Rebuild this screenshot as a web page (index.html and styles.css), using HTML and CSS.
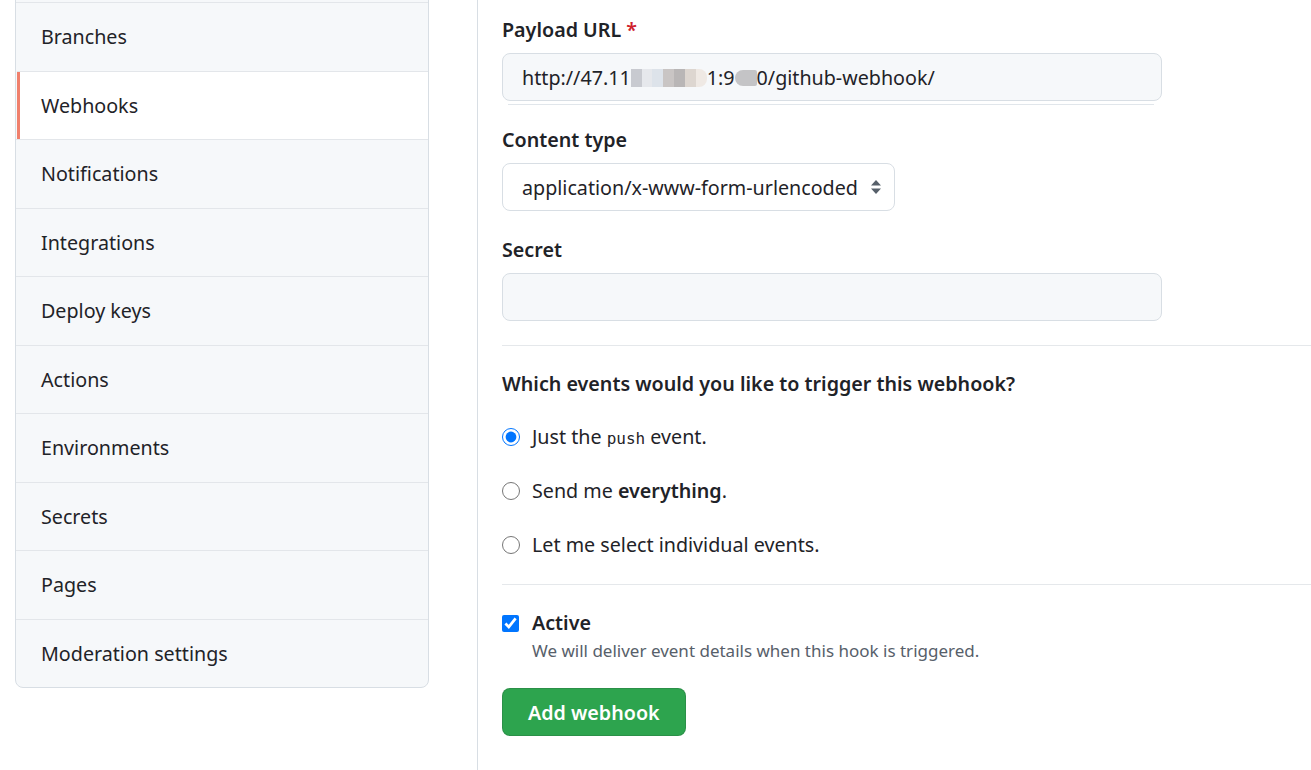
FILE: index.html
```html
<!DOCTYPE html>
<html lang="en">
<head>
<meta charset="utf-8">
<title>Webhooks</title>
<link rel="stylesheet" href="styles.css">
</head>
<body>
<div class="layout">
  <aside class="sidebar">
    <nav class="menu">
      <a class="menu-item">Branches</a>
      <a class="menu-item selected">Webhooks</a>
      <a class="menu-item">Notifications</a>
      <a class="menu-item">Integrations</a>
      <a class="menu-item">Deploy keys</a>
      <a class="menu-item">Actions</a>
      <a class="menu-item">Environments</a>
      <a class="menu-item">Secrets</a>
      <a class="menu-item">Pages</a>
      <a class="menu-item">Moderation settings</a>
    </nav>
  </aside>
  <main class="main">
    <div class="form-group">
      <label class="label">Payload URL <span class="req">*</span></label>
      <div class="input filled">http://47.11<span class="mosaic"><i></i><i></i><i></i><i></i><i></i><i></i><i></i></span>1:9<span class="blob"></span>0/github-webhook/</div>
      <div class="underline"></div>
    </div>
    <div class="form-group">
      <label class="label">Content type</label>
      <div class="select">
        <span>application/x-www-form-urlencoded</span>
        <svg class="caret" width="12" height="16" viewBox="0 0 12 16"><path d="M6 1 L11 6.5 H1 Z M6 15 L11 9.5 H1 Z" fill="#57606a"/></svg>
      </div>
    </div>
    <div class="form-group">
      <label class="label">Secret</label>
      <div class="input"></div>
    </div>
    <hr class="divider">
    <h3 class="heading">Which events would you like to trigger this webhook?</h3>
    <div class="radios">
      <label class="radio"><input type="radio" name="ev" checked><span>Just the <code>push</code> event.</span></label>
      <label class="radio"><input type="radio" name="ev"><span>Send me <strong>everything</strong>.</span></label>
      <label class="radio"><input type="radio" name="ev"><span>Let me select individual events.</span></label>
    </div>
    <hr class="divider">
    <div class="check">
      <input type="checkbox" checked>
      <div class="check-body">
        <div class="check-label">Active</div>
        <div class="note">We will deliver event details when this hook is triggered.</div>
      </div>
    </div>
    <button class="btn">Add webhook</button>
  </main>
</div>
</body>
</html>
```
FILE: styles.css
```css
html, body { margin: 0; padding: 0; background: #fff; }
body {
  font-family: "Noto Sans", "Open Sans", sans-serif;
  font-size: 19.7px;
  color: #1f2328;
  overflow: hidden;
  height: 770px;
}
.layout { display: flex; height: 770px; }
.sidebar {
  width: 477px;
  border-right: 1px solid #d8dee4;
  flex: none;
}
.menu {
  margin: -20px 0 0 15px;
  width: 412px;
  border: 1px solid #d8dee4;
  border-radius: 0 0 8px 8px;
  padding-top: 21px;
  background: #f6f8fa;
  overflow: hidden;
}
.menu-item {
  display: flex;
  align-items: center;
  box-sizing: border-box;
  height: 68.5px;
  padding-top: 1px;
  border-top: 1px solid #e3e6ea;
  padding-left: 25px;
  line-height: 30px;
  color: #1f2328;
}
.menu-item.selected {
  background: #fff;
  box-shadow: inset 3px 0 0 #f0806c;
  margin-left: 1px;
  padding-left: 24px;
}
.main { padding: 15px 0 0 24px; flex: 1; }
.form-group { margin-bottom: 24px; }
.label { display: block; font-weight: 600; line-height: 30px; margin-bottom: 8px; }
.req { color: #cf222e; }
.input {
  width: 658px;
  height: 46px;
  box-sizing: content-box;
  border: 1px solid #d8dee4;
  border-radius: 8px;
  background: #f6f8fa;
  display: flex;
  align-items: center;
}
.input.filled { padding-left: 19px; width: 639px; white-space: pre; }
.mosaic { display: inline-flex; height: 18px; width: 76px; margin-top: 2px; }
.mosaic i { flex: 1; height: 100%; }
.mosaic i:nth-child(1) { background: #c8cad0; }
.mosaic i:nth-child(2) { background: #e6e8ec; }
.mosaic i:nth-child(3) { background: #dde3ea; }
.mosaic i:nth-child(4) { background: #c9c5c4; }
.mosaic i:nth-child(5) { background: #b9b6b6; }
.mosaic i:nth-child(6) { background: #ddd6d0; }
.mosaic i:nth-child(7) { background: #efe9e4; border-radius: 0 8px 8px 0; }
.blob { display: inline-block; width: 22px; height: 16px; background: #c4c4c6; border-radius: 8px 2px 2px 8px; margin-top: 2px; }
.underline { height: 1px; background: #e1e6eb; margin: 3px 7px -4px 6px; width: 646px; }
.select {
  display: inline-flex;
  align-items: center;
  height: 46px;
  border: 1px solid #d8dee4;
  border-radius: 8px;
  padding: 0 12px 0 19px;
  gap: 12px;
  background: #fff;
}
.caret { display: block; }
.divider { border: 0; border-top: 1px solid #e5e8eb; margin: 0; }
.heading { font-size: 19.7px; font-weight: 600; line-height: 30px; margin: 23px 0 23px; }
.radios { display: flex; flex-direction: column; gap: 24px; margin-bottom: 24px; }
.radio { display: flex; align-items: center; height: 30px; line-height: 30px; gap: 12px; }
.radio input { margin: 0; width: 18px; height: 18px; }
code { font-family: "DejaVu Sans Mono", monospace; font-size: 16px; line-height: 1; }
strong { font-weight: 600; }
.check { display: flex; gap: 13px; margin-top: 23px; }
.check input { margin: 7px 0 0 0; width: 17px; height: 17px; }
.check-label { font-weight: 600; line-height: 30px; }
.note { color: #57606a; font-size: 17px; line-height: 26px; }
.btn {
  margin-top: 24px;
  height: 48px;
  padding: 0 25px;
  border: 1px solid rgba(31,35,40,0.15);
  border-radius: 8px;
  background: #2da44e;
  color: #fff;
  font-family: inherit;
  font-size: 19.7px;
  font-weight: 600;
}
```
